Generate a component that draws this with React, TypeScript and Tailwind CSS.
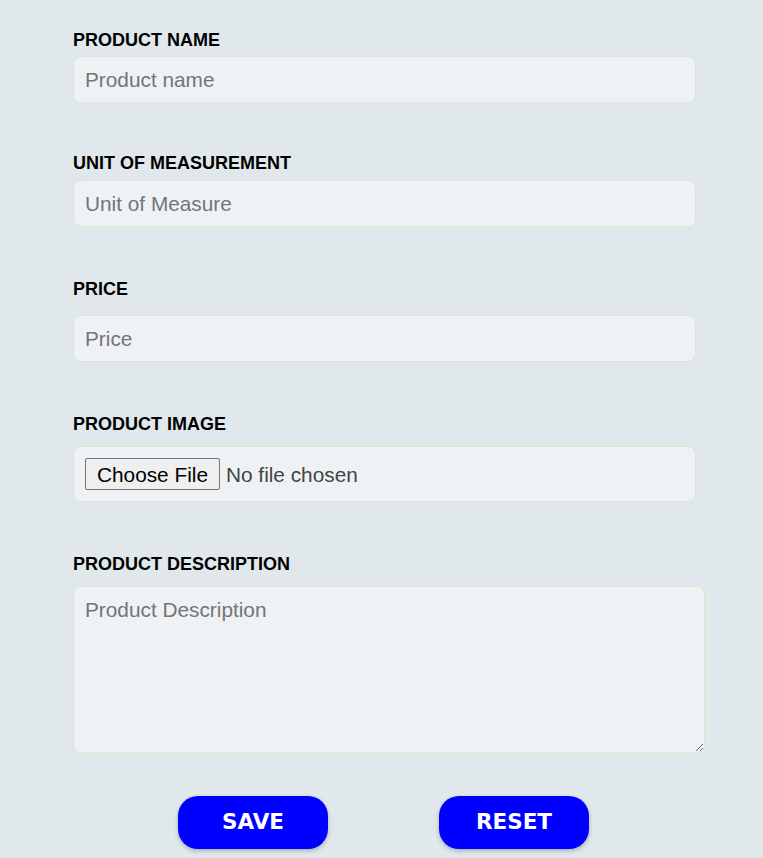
import React from "react";

const labelCls =
  "block text-[18px] leading-[20px] font-bold uppercase text-black font-['Liberation_Sans',Arial,sans-serif]";
const fieldCls =
  "block w-[623px] h-[47px] px-[11px] rounded-lg border border-[#d8eac8] bg-[#eef2f5] text-[20.8px] text-[#333] placeholder:text-[#757575] outline-none font-['Liberation_Sans',Arial,sans-serif]";

export default function App() {
  return (
    <div className="min-h-[858px] bg-[#e1e8ec] pt-[30px] pb-10 font-['Liberation_Sans',Arial,sans-serif]">
      <form className="ml-[73px] w-[632px]" onSubmit={(e) => e.preventDefault()}>
        {/* Product name */}
        <label className={labelCls}>Product Name</label>
        <input className={`${fieldCls} mt-[6px]`} placeholder="Product name" />

        {/* Unit */}
        <label className={`${labelCls} mt-[50px]`}>Unit of Measurement</label>
        <input className={`${fieldCls} mt-[7px]`} placeholder="Unit of Measure" />

        {/* Price */}
        <label className={`${labelCls} mt-[52px]`}>Price</label>
        <input className={`${fieldCls} mt-[16px]`} placeholder="Price" />

        {/* Image */}
        <label className={`${labelCls} mt-[52px]`}>Product Image</label>
        <div className="mt-[12px] flex h-[56px] w-[623px] items-center rounded-lg border border-[#d8eac8] bg-[#eef2f5] px-[11px]">
          <input
            type="file"
            className="text-[20.8px] text-[#444] font-['Liberation_Sans',Arial,sans-serif] file:mr-[6px] file:h-[32px] file:rounded-[2px] file:border file:border-solid file:border-[#767676] file:bg-[#efefef] file:px-[11px] file:text-black file:text-[20.8px] file:font-['Liberation_Sans',Arial,sans-serif]"
          />
        </div>

        {/* Description */}
        <label className={`${labelCls} mt-[52px]`}>Product Description</label>
        <textarea
          className="mt-[12px] block h-[167px] w-[632px] rounded-lg border border-[#d8eac8] bg-[#eef2f5] px-[11px] py-[7px] text-[20.8px] text-[#333] placeholder:text-[#757575] outline-none font-['Liberation_Sans',Arial,sans-serif]"
          placeholder="Product Description"
        />
      </form>

      {/* Actions */}
      <div className="mt-[43px] flex justify-center gap-[111px] pl-[4px]">
        <button className="h-[53px] w-[150px] rounded-[20px] bg-[#0000ff] text-[21.5px] font-bold text-white shadow-[0_2px_4px_rgba(0,0,0,0.25)] font-['DejaVu_Sans',Verdana,sans-serif]">
          SAVE
        </button>
        <button className="h-[53px] w-[150px] rounded-[20px] bg-[#0000ff] text-[21.5px] font-bold text-white shadow-[0_2px_4px_rgba(0,0,0,0.25)] font-['DejaVu_Sans',Verdana,sans-serif]">
          RESET
        </button>
      </div>
    </div>
  );
}
